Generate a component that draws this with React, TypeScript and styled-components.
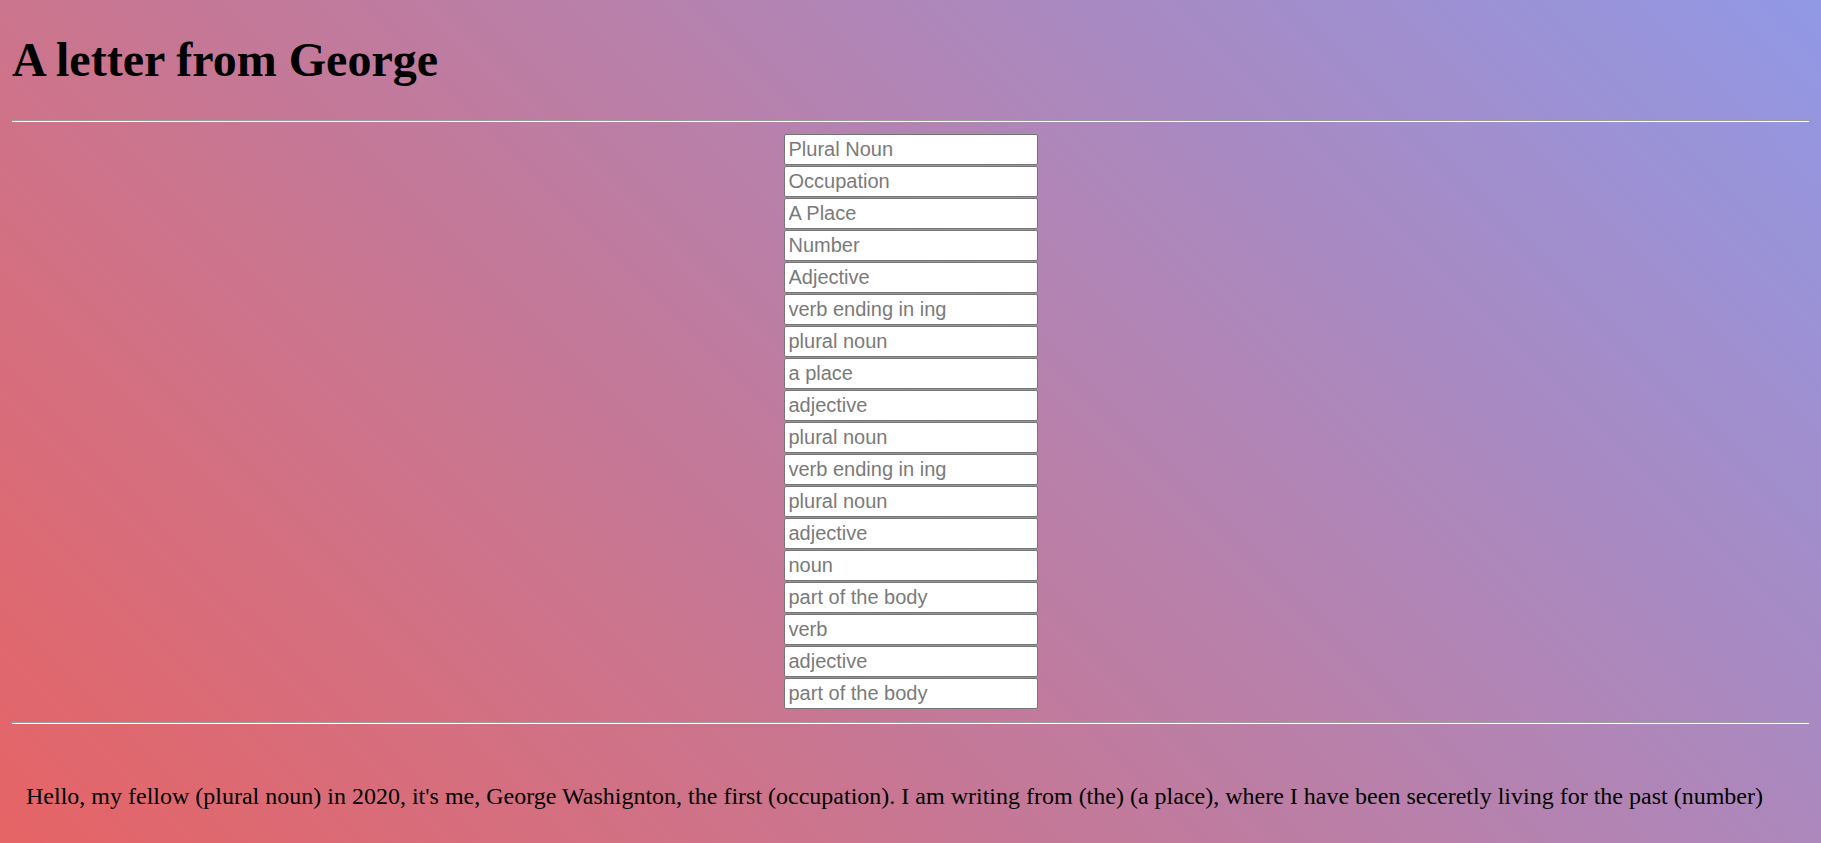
import React from "react";
import styled, { createGlobalStyle } from "styled-components";

const GlobalStyle = createGlobalStyle`
  html {
    min-height: 100%;
    background: linear-gradient(45deg, #e66465, #9198e5);
  }
  body {
    margin: 0;
    padding: 0 12px;
    font-family: "Liberation Serif", "Times New Roman", serif;
    color: #000;
  }
`;

const Title = styled.h1`
  font-family: "Liberation Serif", "Times New Roman", serif;
  font-size: 48px;
  line-height: 55px;
  font-weight: bold;
  margin: 0;
  padding: 32px 0 33px;
`;

const Rule = styled.hr`
  margin: 0;
  height: 0;
  border: none;
  border-top: 1px solid #9c9c9c;
  border-bottom: 1px solid #ffffff;
`;

const Form = styled.form`
  display: flex;
  flex-direction: column;
  align-items: center;
  gap: 1px;
  padding: 12px 0 13px;
`;

const Field = styled.input`
  box-sizing: border-box;
  width: 254px;
  height: 31px;
  margin: 0;
  padding: 0 4px;
  border: 1px solid #767676;
  border-radius: 2px;
  background: #fff;
  font-family: "Liberation Sans", Arial, sans-serif;
  font-size: 20px;
  color: #000;
  outline: none;

  &::placeholder {
    color: #7a7a7a;
  }
`;

const Story = styled.div`
  padding: 59px 14px 0;
`;

const StoryText = styled.p`
  margin: 0;
  font-family: "Liberation Serif", "Times New Roman", serif;
  font-size: 24px;
  line-height: 27px;
  white-space: nowrap;
`;

const fields = [
  "Plural Noun",
  "Occupation",
  "A Place",
  "Number",
  "Adjective",
  "verb ending in ing",
  "plural noun",
  "a place",
  "adjective",
  "plural noun",
  "verb ending in ing",
  "plural noun",
  "adjective",
  "noun",
  "part of the body",
  "verb",
  "adjective",
  "part of the body",
];

export default function App() {
  return (
    <>
      <GlobalStyle />
      <Title>A letter from George</Title>
      <Rule />
      <Form onSubmit={(e) => e.preventDefault()}>
        {fields.map((f, i) => (
          <Field key={i} type="text" placeholder={f} />
        ))}
      </Form>
      <Rule />
      <Story>
        <StoryText>
          Hello, my fellow (plural noun) in 2020, it's me, George Washignton, the first (occupation). I am writing from (the) (a place), where I have been seceretly living for the past (number)
        </StoryText>
      </Story>
    </>
  );
}
